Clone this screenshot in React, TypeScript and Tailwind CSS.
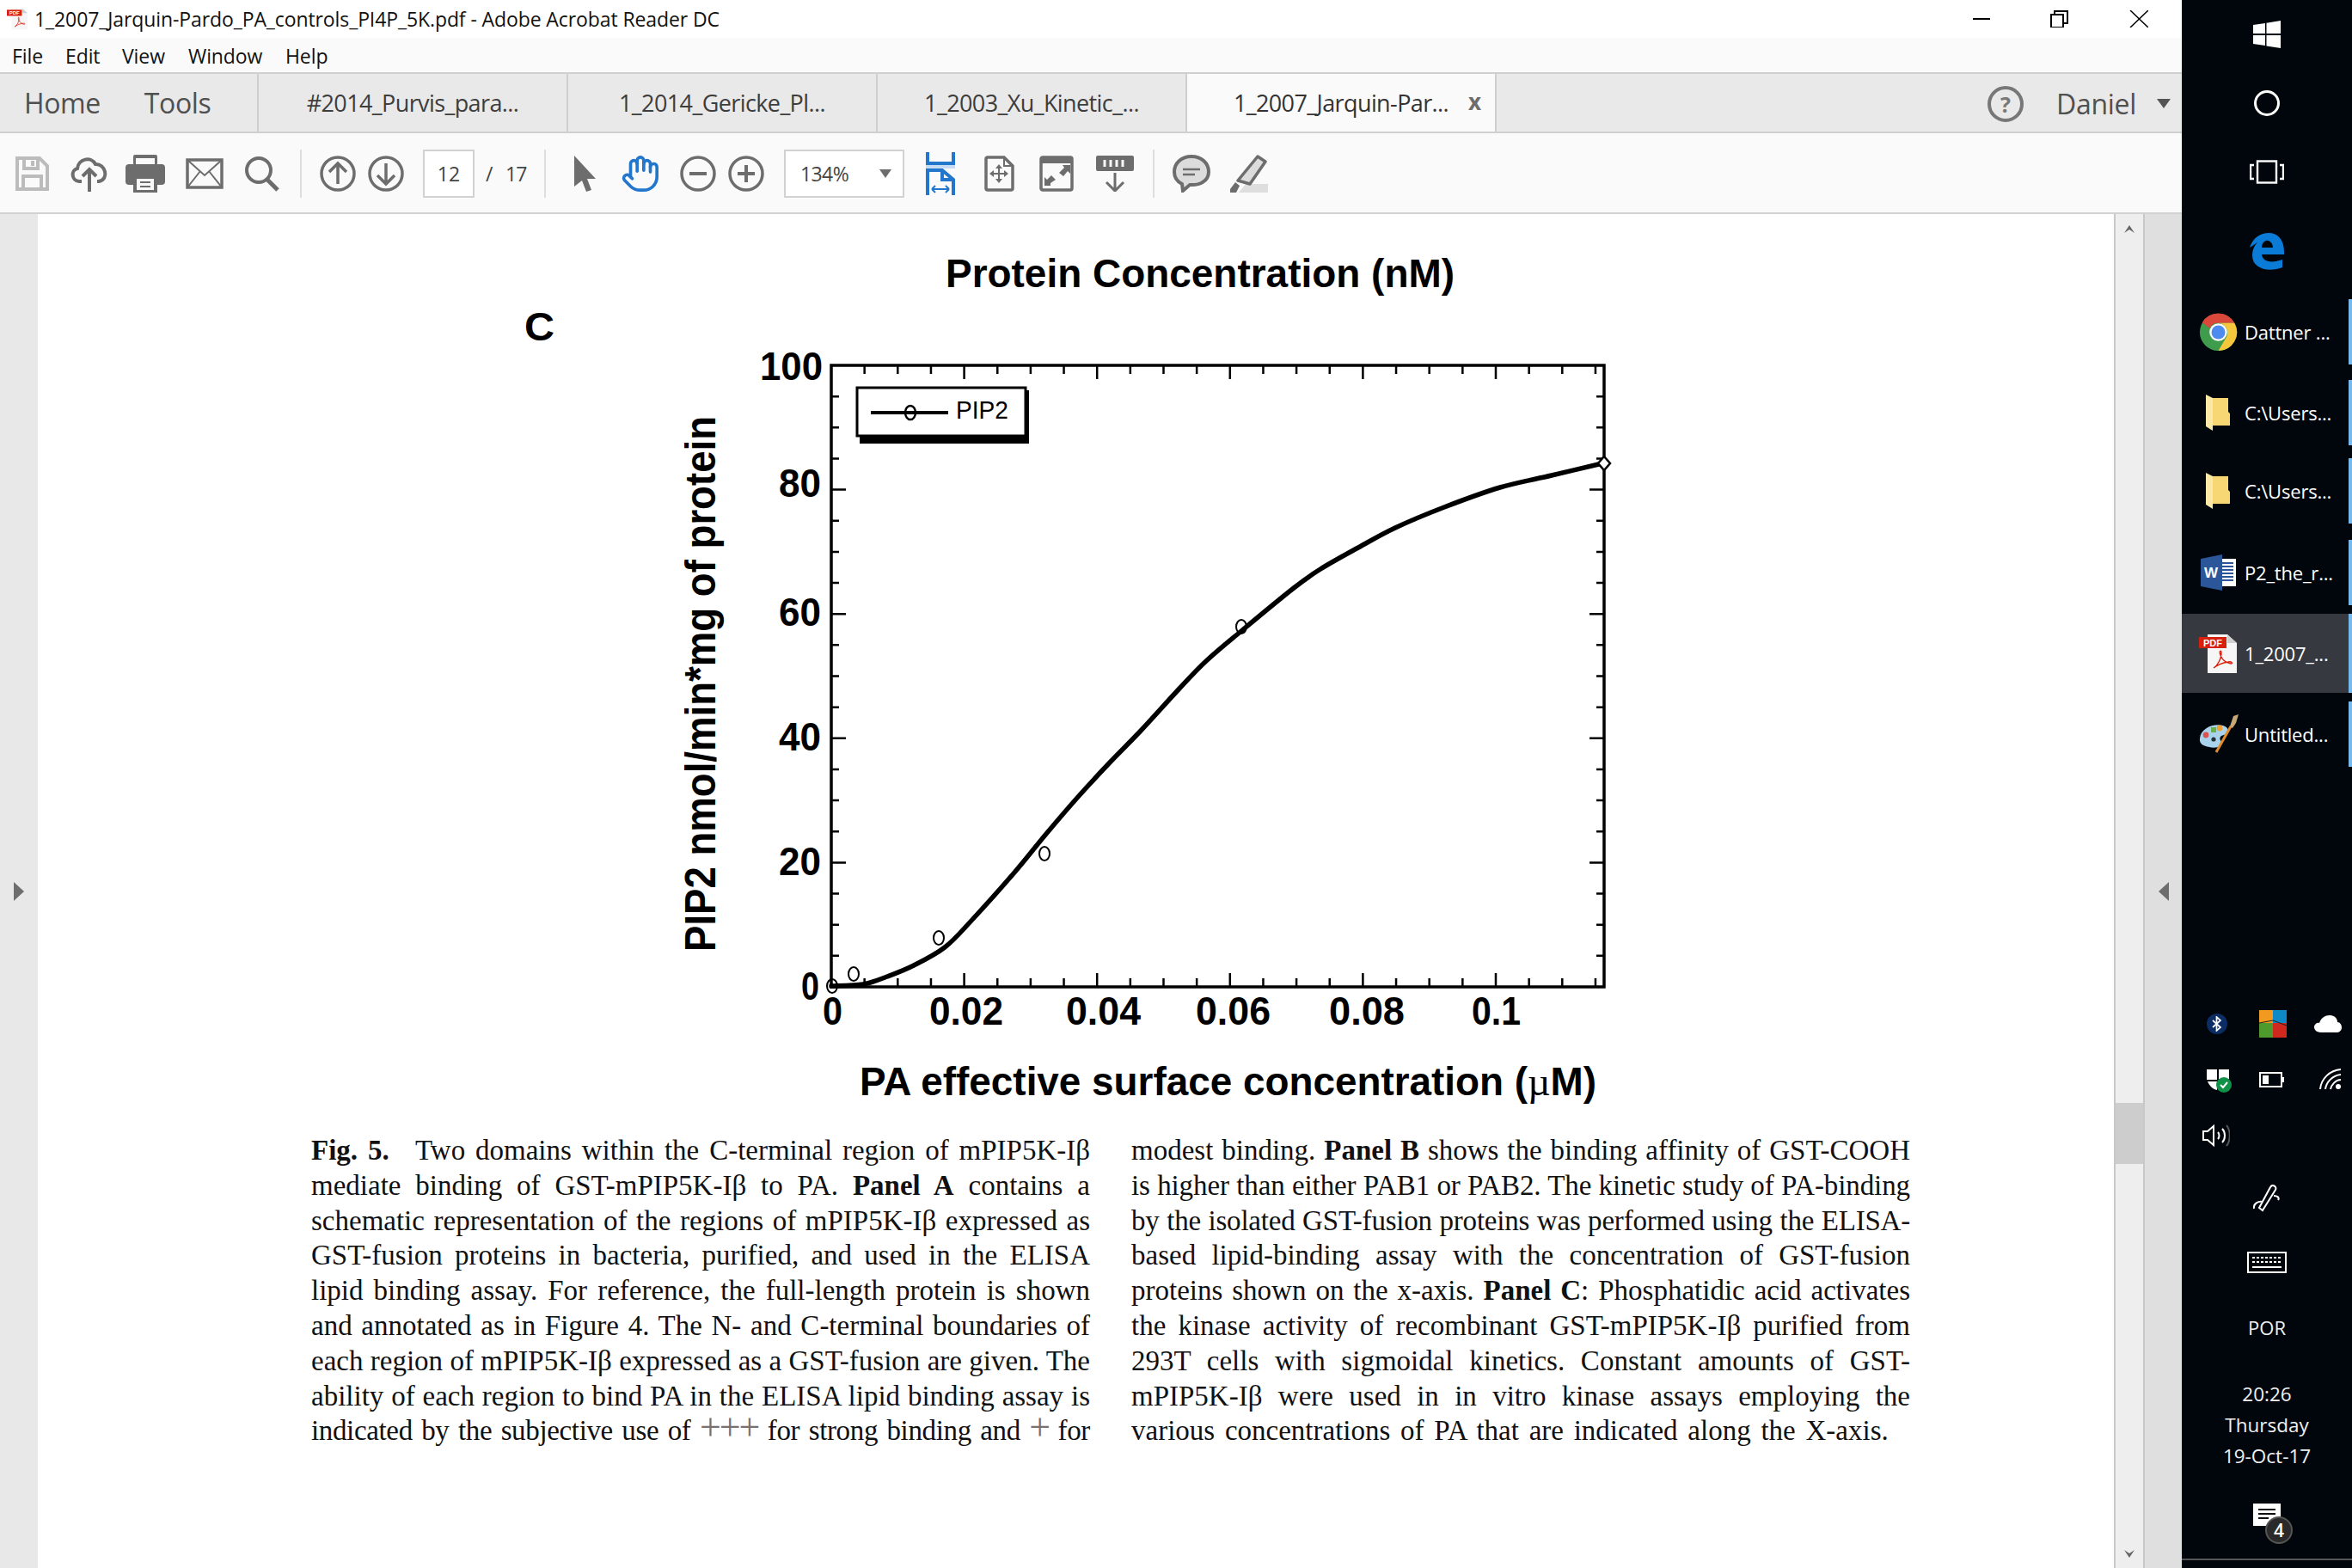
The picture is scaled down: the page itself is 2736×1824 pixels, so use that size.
import React from "react";
import { Hand } from "lucide-react";

const G = "#6d6d6d";
const ui = { fontFamily: '"Open Sans", "Noto Sans", sans-serif' };
const serif = { fontFamily: '"Liberation Serif", serif' };
const arial = '"Liberation Sans", Arial, sans-serif';

function PdfIcon({ w, h, label }: { w: number; h: number; label?: boolean }) {
  return (
    <svg width={w} height={h} viewBox="0 0 44 45" className="shrink-0">
      <path d="M10 0H33L44 10V45H10Z" fill="#f6f6f6" />
      <path d="M33 0V10H44Z" fill="#cfcfcf" />
      <rect x="0" y="3" width="32" height="13" fill="#d8200f" />
      {label && <text x="16" y="13.5" textAnchor="middle" fontSize="11" fontWeight="700" fill="#fff" fontFamily={arial}>PDF</text>}
      <path d="M17 39C22 36 26 28 26 21C26 18 23 19 25 24C27 30 31 33 37 34C40 34 38 31 34 32C28 33 22 35 17 39Z" fill="none" stroke="#d8200f" strokeWidth="1.4" />
    </svg>
  );
}
function Chrome() {
  return (
    <svg width="45" height="45" viewBox="0 0 48 48" className="shrink-0">
      <circle cx="24" cy="24" r="23" fill="#3f9c4d" />
      <path d="M4 12A23 23 0 0 1 44 12.5H24A12 12 0 0 0 13 19Z" fill="#d9483b" />
      <path d="M44 12.5A23 23 0 0 1 24 47L34 30A12 12 0 0 0 24 12.5Z" fill="#f5c73d" />
      <circle cx="24" cy="24" r="11" fill="#fff" />
      <circle cx="24" cy="24" r="8.5" fill="#4d8bf0" />
    </svg>
  );
}
function Folder() {
  return (
    <svg width="28" height="42" viewBox="0 0 28 42" className="shrink-0">
      <path d="M8 4H26V20L28 22V36H8Z" fill="#f7d774" />
      <path d="M0 0L8 4V42L0 37Z" fill="#fce9a8" />
    </svg>
  );
}
function Word() {
  return (
    <svg width="41" height="42" viewBox="0 0 41 42" className="shrink-0">
      <rect x="22" y="5" width="19" height="32" fill="#fff" />
      <path d="M25 10H38M25 14H38M25 18H38M25 22H38M25 26H38M25 30H38" stroke="#2b579a" strokeWidth="2" />
      <path d="M0 5L25 0V42L0 37Z" fill="#2b579a" />
      <text x="12" y="27" textAnchor="middle" fontSize="17" fontWeight="700" fill="#fff" fontFamily={arial}>W</text>
    </svg>
  );
}
function Paint() {
  return (
    <svg width="47" height="46" viewBox="0 0 47 46" className="shrink-0">
      <path d="M2 28C3 16 18 10 29 13C36 15 37 22 30 24C25 25 24 28 27 32C29 37 21 40 13 38C6 37 1 34 2 28Z" fill="#a9d3ec" />
      <circle cx="9" cy="24" r="3.4" fill="#d9534f" />
      <rect x="15" y="15" width="6" height="6" fill="#6ab04c" />
      <circle cx="25" cy="16" r="3.4" fill="#f0a030" />
      <circle cx="18" cy="29" r="2.6" fill="#26323a" />
      <path d="M21 44L38 14" stroke="#e28b2a" strokeWidth="3" />
      <path d="M37 14L41 2L47 0L44 10L40 16Z" fill="#c9a877" />
    </svg>
  );
}

function smooth(p: number[][]) {
  let d = `M${p[0][0]} ${p[0][1]}`;
  for (let i = 0; i < p.length - 1; i++) {
    const a = p[Math.max(0, i - 1)], b = p[i], c = p[i + 1], e = p[Math.min(p.length - 1, i + 2)];
    d += `C${b[0] + (c[0] - a[0]) / 6} ${b[1] + (c[1] - a[1]) / 6} ${c[0] - (e[0] - b[0]) / 6} ${c[1] - (e[1] - b[1]) / 6} ${c[0]} ${c[1]}`;
  }
  return d;
}

function FigureChart() {
  const x0 = 967, x1 = 1866, y0 = 1148, y1 = 425;
  const xs = Array.from({ length: 24 }, (_, i) => i);
  const ys = Array.from({ length: 21 }, (_, i) => i);
  const pts = [[967, 1147], [1004, 1145], [1032, 1136], [1063, 1123], [1099, 1102], [1129, 1072], [1180, 1015], [1217, 970], [1254, 927], [1290, 888], [1327, 850], [1371, 802], [1403, 769], [1444, 734], [1505, 684], [1536, 662], [1580, 637], [1623, 614], [1680, 590], [1745, 567], [1805, 553], [1864, 539]];
  const tick = { fontFamily: arial, fontWeight: 700 };
  const yl: [string, number, number, number][] = [["100", 884, 73, 442], ["80", 906, 49, 578], ["60", 906, 49, 728], ["40", 906, 49, 873], ["20", 906, 49, 1018], ["0", 932, 21, 1163]];
  const xl: [string, number, number][] = [["0", 957, 23], ["0.02", 1081, 86], ["0.04", 1240, 87], ["0.06", 1391, 87], ["0.08", 1546, 88], ["0.1", 1712, 57]];
  return (
    <svg viewBox="600 280 1300 1020" className="ml-[556px] mt-[31px] block h-[1020px] w-[1300px]">
      <text x="1100" y="334" fontSize="46" textLength="592" lengthAdjust="spacingAndGlyphs" {...tick}>Protein Concentration (nM)</text>
      <text x="610" y="396" fontSize="47" textLength="35" lengthAdjust="spacingAndGlyphs" {...tick}>C</text>
      <rect x={x0} y={y1} width={x1 - x0} height={y0 - y1} fill="#fff" stroke="#000" strokeWidth="3.5" />
      {xs.map((i) => {
        const x = x0 + i * 38.65;
        const l = i % 4 === 0 ? 16 : 10;
        return x < x1 - 4 && i > 0 ? (
          <path key={i} d={`M${x} ${y0}V${y0 - l}M${x} ${y1}V${y1 + l}`} stroke="#000" strokeWidth="2.5" />
        ) : null;
      })}
      {ys.map((i) => {
        const y = y0 - i * 36.15;
        const l = i % 4 === 0 ? 17 : 9;
        return i > 0 && i < 20 ? (
          <path key={i} d={`M${x0} ${y}H${x0 + l}M${x1} ${y}H${x1 - l}`} stroke="#000" strokeWidth="2.5" />
        ) : null;
      })}
      <path d={smooth(pts)} fill="none" stroke="#000" strokeWidth="5.5" strokeLinejoin="round" strokeLinecap="round" />
      {[[968, 1147], [993, 1133], [1092, 1091], [1215, 993], [1444, 729]].map(([x, y], i) => (
        <ellipse key={i} cx={x} cy={y} rx="6" ry="8" fill="none" stroke="#000" strokeWidth="2" />
      ))}
      <path d="M1866 531L1873 539L1866 547L1859 539Z" fill="#fff" stroke="#000" strokeWidth="2.5" />
      <path d="M1000 507V516H1197V454H1190V507Z" fill="#000" />
      <rect x="997" y="451" width="196" height="56" fill="#fff" stroke="#000" strokeWidth="3" />
      <path d="M1013 480H1103" stroke="#000" strokeWidth="4" />
      <ellipse cx="1059" cy="480" rx="6" ry="8" fill="none" stroke="#000" strokeWidth="2.5" />
      <text x="1112" y="487" fontSize="30" textLength="61" lengthAdjust="spacingAndGlyphs" fontFamily={arial}>PIP2</text>
      {yl.map(([t, x, w, y]) => (
        <text key={t + "y"} x={x} y={y} fontSize="46" textLength={w} lengthAdjust="spacingAndGlyphs" {...tick}>{t}</text>
      ))}
      {xl.map(([t, x, w]) => (
        <text key={t + "x"} x={x} y="1192" fontSize="46" textLength={w} lengthAdjust="spacingAndGlyphs" {...tick}>{t}</text>
      ))}
      <text x="1000" y="1274" fontSize="46" textLength="857" lengthAdjust="spacingAndGlyphs" {...tick}>
        PA effective surface concentration (<tspan fontFamily='"Liberation Serif", serif' fontWeight="400">µ</tspan>M)
      </text>
      <text transform="translate(832 1107) rotate(-90)" fontSize="50" textLength="623" lengthAdjust="spacingAndGlyphs" {...tick}>PIP2 nmol/min*mg of protein</text>
    </svg>
  );
}

function Line({ children, last, cls = "" }: { children: React.ReactNode; last?: boolean; cls?: string }) {
  return <div className={`h-[40.8px] whitespace-nowrap ${last ? "" : "text-justify [text-align-last:justify]"} ${cls}`}>{children}</div>;
}

function Plus({ children }: { children: string }) {
  return <span className="text-[44px] font-normal leading-[0] tracking-[-2px] text-[#7a7070]">{children}</span>;
}

function Caption() {
  return (
    <div className="ml-[318px] mt-[18px] flex w-[1862px] gap-[48px] text-[33px] leading-[40.8px] text-[#111]" style={serif}>
      <div className="w-[906px] shrink-0">
        <Line><b className="mr-[19px]">Fig. 5.</b> Two domains within the C-terminal region of mPIP5K-Iβ</Line>
        <Line>mediate binding of GST-mPIP5K-Iβ to PA. <b>Panel A</b> contains a</Line>
        <Line>schematic representation of the regions of mPIP5K-Iβ expressed as</Line>
        <Line>GST-fusion proteins in bacteria, purified, and used in the ELISA</Line>
        <Line>lipid binding assay. For reference, the full-length protein is shown</Line>
        <Line>and annotated as in Figure 4. The N- and C-terminal boundaries of</Line>
        <Line>each region of mPIP5K-Iβ expressed as a GST-fusion are given. The</Line>
        <Line>ability of each region to bind PA in the ELISA lipid binding assay is</Line>
        <Line cls="tracking-[-0.35px]">indicated by the subjective use of <Plus>+++</Plus> for strong binding and <Plus>+</Plus> for</Line>
      </div>
      <div className="w-[906px] shrink-0">
        <Line>modest binding. <b>Panel B</b> shows the binding affinity of GST-COOH</Line>
        <Line cls="tracking-[-0.1px]">is higher than either PAB1 or PAB2. The kinetic study of PA-binding</Line>
        <Line cls="tracking-[-0.2px]">by the isolated GST-fusion proteins was performed using the ELISA-</Line>
        <Line>based lipid-binding assay with the concentration of GST-fusion</Line>
        <Line>proteins shown on the x-axis. <b>Panel C</b>: Phosphatidic acid activates</Line>
        <Line>the kinase activity of recombinant GST-mPIP5K-Iβ purified from</Line>
        <Line>293T cells with sigmoidal kinetics. Constant amounts of GST-</Line>
        <Line>mPIP5K-Iβ were used in in vitro kinase assays employing the</Line>
        <Line last cls="[word-spacing:3.5px]">various concentrations of PA that are indicated along the X-axis.</Line>
      </div>
    </div>
  );
}

function Tab({ label, active }: { label: string; active?: boolean }) {
  return (
    <div className={`relative flex h-full w-[360px] shrink-0 items-center justify-center border-r-2 border-[#cfcfcf] text-[27px] ${active ? "bg-[#fafafa] text-[#333]" : "text-[#3d3d3d]"}`}>
      <span className="mt-[2px] tracking-[-0.6px]">{label}</span>
      {active && <span className="absolute left-[327px] top-[13px] text-[26px] font-bold text-[#6d6d6d]">x</span>}
    </div>
  );
}

function Toolbar() {
  const sep = "h-[56px] w-[2px] shrink-0 bg-[#dedede]";
  return (
    <div className="flex h-[94px] shrink-0 items-center border-b-2 border-[#d2d2d2] bg-[#fafafa] pl-[17px] pt-[2px]">
      <svg width="40" height="42" viewBox="0 0 40 42" className="shrink-0" fill="none" stroke="#bcbcbc" strokeWidth="4">
        <path d="M3 3H29L38 12V39H3Z" /><path d="M11 3V15H27V3" /><path d="M10 39V24H31V39" /><path d="M21 6V12" />
      </svg>
      <svg width="44" height="44" viewBox="0 0 44 44" className="ml-[25px] shrink-0" fill="none" stroke={G} strokeWidth="4">
        <path d="M13 31H10C1 30 0 18 8 16C9 5 24 1 29 11C40 10 46 28 33 31H31" /><path d="M22 43V18M14 25L22 17L30 25" />
      </svg>
      <svg width="46" height="44" viewBox="0 0 46 44" className="ml-[20px] shrink-0">
        <rect x="9" y="0" width="28" height="12" rx="2" fill={G} /><rect x="12" y="4" width="22" height="8" fill="#fafafa" />
        <rect x="0" y="11" width="46" height="24" rx="4" fill={G} /><rect x="9" y="26" width="28" height="18" fill={G} /><rect x="13" y="28" width="20" height="13" fill="#fafafa" />
        <path d="M17 32H29M17 37H29" stroke={G} strokeWidth="2" />
      </svg>
      <svg width="44" height="36" viewBox="0 0 44 36" className="ml-[24px] shrink-0" fill="none" stroke={G} strokeWidth="3.5">
        <rect x="2" y="2" width="40" height="32" /><path d="M2 2L22 20L42 2M2 34L17 15M42 34L27 15" strokeWidth="2" />
      </svg>
      <svg width="41" height="42" viewBox="0 0 41 42" className="ml-[24px] shrink-0" fill="none" stroke={G} strokeWidth="4">
        <circle cx="17" cy="17" r="14" /><path d="M27 28L39 40" strokeWidth="5" />
      </svg>
      <div className={`ml-[24px] ${sep}`} />
      <svg width="42" height="42" viewBox="0 0 42 42" className="ml-[21px] shrink-0" fill="none" stroke={G} strokeWidth="3.5">
        <circle cx="21" cy="21" r="19" /><path d="M21 33V9M11 19L21 9L31 19" />
      </svg>
      <svg width="42" height="42" viewBox="0 0 42 42" className="ml-[14px] shrink-0" fill="none" stroke={G} strokeWidth="3.5">
        <circle cx="21" cy="21" r="19" /><path d="M21 9V33M11 23L21 33L31 23" />
      </svg>
      <div className="ml-[22px] flex h-[56px] w-[60px] shrink-0 items-center justify-center border-2 border-[#d2d2d2] bg-white text-[23px] text-[#444]">12</div>
      <span className="ml-[13px] w-[12px] shrink-0 text-[23px] text-[#444]">/</span>
      <span className="ml-[11px] w-[26px] shrink-0 text-[23px] text-[#444] tracking-[-1px]">17</span>
      <div className={`ml-[19px] ${sep}`} />
      <svg width="27" height="42" viewBox="0 0 27 42" className="ml-[32px] shrink-0">
        <path d="M1 0L26 27H16L21 40L15 42L10 29L1 36Z" fill={G} />
      </svg>
      <Hand className="ml-[28px] h-[48px] w-[46px] shrink-0 text-[#2277cc]" strokeWidth={1.9} />
      <svg width="42" height="42" viewBox="0 0 42 42" className="ml-[23px] shrink-0" fill="none" stroke={G} strokeWidth="3.5">
        <circle cx="21" cy="21" r="19" /><path d="M11 21H31" strokeWidth="4" />
      </svg>
      <svg width="42" height="42" viewBox="0 0 42 42" className="ml-[14px] shrink-0" fill="none" stroke={G} strokeWidth="3.5">
        <circle cx="21" cy="21" r="19" /><path d="M11 21H31M21 11V31" strokeWidth="4" />
      </svg>
      <div className="relative ml-[23px] flex h-[56px] w-[140px] shrink-0 items-center border-2 border-[#d2d2d2] bg-white pl-[17px] text-[23px] text-[#444] tracking-[-0.6px]">
        134%
        <svg width="14" height="10" viewBox="0 0 14 10" className="absolute left-[109px] top-[21px]"><path d="M0 0H14L7 10Z" fill={G} /></svg>
      </div>
      <svg width="34" height="50" viewBox="0 0 34 50" className="ml-[25px] shrink-0" fill="none" stroke="#2277cc" strokeWidth="4">
        <path d="M2 0V13H32V0" /><rect x="0" y="15" width="34" height="4" fill="#c5dcf2" stroke="none" />
        <path d="M2 50V21H19L32 32V50M19 21V32H32" /><path d="M7 43H27M7 43L11 39M7 43L11 47M27 43L23 39M27 43L23 47" strokeWidth="2" />
      </svg>
      <svg width="36" height="42" viewBox="0 0 36 42" className="ml-[33px] shrink-0" fill="none" stroke={G} strokeWidth="3.5">
        <path d="M3 4Q3 2 5 2H24L34 12V38Q34 40 32 40H5Q3 40 3 38Z" /><path d="M24 2V12H34" strokeWidth="2" />
        <path d="M18 12V30M10 21H26" strokeWidth="2" /><path d="M14 15L18 10L22 15ZM14 27L18 32L22 27ZM12 17L7 21L12 25ZM24 17L29 21L24 25Z" fill={G} stroke="none" />
      </svg>
      <svg width="40" height="42" viewBox="0 0 40 42" className="ml-[29px] shrink-0" fill="none" stroke={G} strokeWidth="3.5">
        <rect x="2" y="2" width="36" height="38" rx="2" /><path d="M2 6H38" strokeWidth="6" />
        <path d="M27 11H36V21L33 18L28 24L23 20L29 14ZM13 35H6V25L9 28L14 23L19 28L13 32Z" fill={G} stroke="none" />
      </svg>
      <svg width="44" height="42" viewBox="0 0 44 42" className="ml-[26px] shrink-0" fill="none">
        <rect x="0" y="0" width="44" height="18" rx="2" fill={G} /><path d="M10 5V13M17 5V13M24 5V13M31 5V13" stroke="#fafafa" strokeWidth="3" />
        <path d="M22 20V41M12 31L22 41L32 31" stroke={G} strokeWidth="3" />
      </svg>
      <div className={`ml-[22px] ${sep}`} />
      <svg width="44" height="44" viewBox="0 0 44 44" className="ml-[21px] shrink-0">
        <path d="M22 2C34 2 42 10 42 20C42 30 32 36 20 35L12 42L11 34C5 31 2 26 2 20C2 10 10 2 22 2Z" fill="#dcdcdc" stroke={G} strokeWidth="4" />
        <path d="M12 17H32M12 23H26" stroke={G} strokeWidth="2.5" />
      </svg>
      <svg width="46" height="44" viewBox="0 0 46 44" className="ml-[21px] shrink-0">
        <path d="M12 44L20 34H46V44Z" fill="#dedede" />
        <path d="M34 2L43 8L25 34L11 30Z" fill="#dcdcdc" stroke={G} strokeWidth="3.5" strokeLinejoin="round" />
        <path d="M8 32L2 40L2 44H9L13 36Z" fill={G} />
      </svg>
    </div>
  );
}

function TaskRow({ icon, label, h, active, bar }: { icon: React.ReactNode; label: string; h: string; active?: boolean; bar: string }) {
  return (
    <div className={`relative flex shrink-0 items-center pr-[4px] ${h} ${active ? "bg-[#363a40]" : ""}`}>
      <div className="flex w-[73px] shrink-0 items-center justify-center pl-[11px]">{icon}</div>
      <span className="truncate text-[22px] tracking-[-0.2px] text-white" style={ui}>{label}</span>
      <div className={`absolute right-0 w-[4px] bg-[#76b9ed] ${bar}`} />
    </div>
  );
}

function Taskbar() {
  return (
    <div className="flex w-[198px] shrink-0 flex-col items-stretch bg-[#01060d]" style={ui}>
      <div className="ml-[83px] mt-[24px] shrink-0">
        <svg width="32" height="32" viewBox="0 0 32 32" className="block"><path d="M0 5L14 3V15H0ZM15.5 2.7L32 0V15H15.5ZM0 17H14V29L0 27ZM15.5 17H32V32L15.5 29.5Z" fill="#fff" /></svg>
      </div>
      <div className="ml-[84px] mt-[49px] h-[30px] w-[30px] shrink-0 rounded-full border-[3.5px] border-white" />
      <svg width="40" height="28" viewBox="0 0 40 28" className="ml-[79px] mt-[51px] block shrink-0" fill="none" stroke="#fff" strokeWidth="2.4">
        <rect x="9" y="1.5" width="22" height="25" /><path d="M5 6H1V22H5M35 6H39V22H35" />
      </svg>
      <svg width="40" height="43" viewBox="0 0 40 43" className="ml-[79px] mt-[57px] block shrink-0">
        <path fillRule="evenodd" d="M0 17C4 5 13 0 22 0C33 0 40 8 40 22V25H14C15 33 24 36 38 31V40C22 46 3 42 3 26C3 20 5 15 9 11C6 13 3 15 0 17ZM14 17H27C27 11 22 8 19 9C16 10 14 13 14 17Z" fill="#0a7bd6" />
      </svg>
      <div className="mt-[34px] flex flex-col">
        <TaskRow h="h-[76px]" bar="top-0 h-[76px]" icon={<Chrome />} label="Dattner ..." />
        <div className="h-[18px]" />
        <TaskRow h="h-[76px]" bar="top-0 h-[76px]" icon={<Folder />} label="C:\Users..." />
        <div className="h-[15px]" />
        <TaskRow h="h-[76px]" bar="top-0 h-[76px]" icon={<Folder />} label="C:\Users..." />
        <div className="h-[19px]" />
        <TaskRow h="h-[76px]" bar="top-0 h-[76px]" icon={<Word />} label="P2_the_r..." />
        <div className="h-[10px]" />
        <TaskRow h="h-[92px]" active bar="top-0 h-[92px]" icon={<PdfIcon w={44} h={45} label />} label="1_2007_..." />
        <div className="h-[10px]" />
        <TaskRow h="h-[76px]" bar="top-0 h-[76px]" icon={<Paint />} label="Untitled..." />
      </div>
      <div className="ml-[24px] mt-[266px] grid w-[174px] shrink-0 grid-cols-3 grid-rows-[65px_65px_65px] items-center">
        <div className="ml-[5px] flex h-[24px] w-[24px] items-center justify-center rounded-full bg-[#0b2d63]">
          <svg width="12" height="18" viewBox="0 0 12 18" fill="none" stroke="#fff" strokeWidth="1.7"><path d="M1 5L10 13L5.5 17V1L10 5L1 13" /></svg>
        </div>
        <svg width="32" height="32" viewBox="0 0 32 32" className="ml-[8px]">
          <rect width="16" height="15" fill="#f29a1f" /><rect x="16" width="16" height="15" fill="#0d8ac6" /><rect y="15" width="16" height="17" fill="#4f9a2d" /><rect x="16" y="15" width="16" height="17" fill="#d0281c" /><path d="M0 15L16 12L32 18" stroke="#222" strokeWidth="1" fill="none" />
        </svg>
        <svg width="32" height="21" viewBox="0 0 32 21" className="ml-[14px]"><path d="M8 21C2 21 0 17 0 15C0 11 4 9 6 10C8 4 13 1 18 1C24 1 27 5 27 9C30 9 32 12 32 15C32 19 29 21 26 21Z" fill="#fff" /></svg>
        <svg width="30" height="30" viewBox="0 0 30 30" className="ml-[4px]">
          <path d="M1 3H13V15H1C1 15 1 10 1 3ZM15 3H27V14H15ZM2 17H13V27C8 26 4 22 2 17Z" fill="#fff" /><circle cx="21" cy="21" r="9" fill="#119148" /><path d="M17 21L20 24L25 18" stroke="#fff" strokeWidth="2" fill="none" />
        </svg>
        <svg width="29" height="18" viewBox="0 0 29 18" className="ml-[8px]" fill="none" stroke="#fff" strokeWidth="2"><rect x="1" y="1" width="25" height="16" /><rect x="4" y="4" width="7" height="10" fill="#fff" stroke="none" /><rect x="27" y="6" width="2" height="6" fill="#fff" stroke="none" /></svg>
        <svg width="26" height="25" viewBox="0 0 26 25" className="ml-[20px]" fill="none" stroke="#fff" strokeWidth="2"><path d="M1 24C2 12 12 2 25 1M7 24C8 16 15 8 25 7M13 24C14 19 19 13 25 13" /><circle cx="22" cy="21" r="3" fill="#fff" stroke="none" /></svg>
        <svg width="32" height="28" viewBox="0 0 32 28" fill="none" stroke="#fff" strokeWidth="2">
          <path d="M1 9H6L13 3V25L6 19H1Z" /><path d="M18 10C20 12 20 16 18 18M23 6C27 10 27 18 23 22" /><path d="M28 2C33 8 33 20 28 26" stroke="#555" />
        </svg>
      </div>
      <svg width="32" height="32" viewBox="0 0 32 32" className="ml-[83px] mt-[25px] block shrink-0" fill="none" stroke="#fff" strokeWidth="2">
        <path d="M11 30L26 6C28 2 22 -1 20 3L7 27ZM1 28C0 22 6 19 11 20M24 13C28 13 31 15 29 18" />
      </svg>
      <svg width="46" height="25" viewBox="0 0 46 25" className="ml-[76px] mt-[46px] block shrink-0" fill="none" stroke="#fff">
        <rect x="1" y="1" width="44" height="23" strokeWidth="2" />
        <path d="M6 7H40M6 12H40" strokeWidth="2" strokeDasharray="3 2" /><path d="M6 18H40" strokeWidth="2" />
      </svg>
      <div className="mt-[46px] shrink-0 text-center text-[22px] leading-[34px] text-[#f0f0f0]">POR</div>
      <div className="mt-[43px] shrink-0 text-center text-[22.5px] leading-[36px] text-[#f0f0f0]">
        <div>20:26</div><div>Thursday</div><div>19-Oct-17</div>
      </div>
      <div className="relative ml-[83px] mt-[37px] h-[26px] w-[32px] shrink-0 bg-white">
        <div className="mx-[6px] mt-[6px] h-[2px] bg-[#111]" /><div className="mx-[6px] mt-[3px] h-[2px] bg-[#111]" /><div className="mx-[6px] mt-[3px] h-[2px] w-[12px] bg-[#111]" />
        <div className="absolute left-[14px] top-[15px] flex h-[32px] w-[32px] items-center justify-center rounded-full border-2 border-[#555] bg-[#2a2a2a] text-[21px] font-semibold leading-none text-white">4</div>
      </div>
      <div className="mt-[38px] h-[2px] shrink-0 bg-[#555]" />
    </div>
  );
}

export default function App() {
  return (
    <div className="flex h-[1824px] w-[2736px] overflow-hidden bg-white" style={ui}>
      <div className="flex min-w-0 flex-1 flex-col">
        <div className="flex h-[44px] shrink-0 items-center bg-white pl-[8px]">
          <PdfIcon w={24} h={30} label />
          <span className="ml-[8px] text-[23px] tracking-[-0.1px] text-[#111]">1_2007_Jarquin-Pardo_PA_controls_PI4P_5K.pdf - Adobe Acrobat Reader DC</span>
          <svg width="204" height="20" viewBox="0 0 204 20" className="ml-auto mr-[39px]" fill="none" stroke="#000" strokeWidth="2">
            <path d="M0 10H20" />
            <rect x="91" y="5" width="14" height="15" /><path d="M95 5V1H110V15H105" />
            <path d="M183 0L204 20M204 0L183 20" strokeWidth="1.5" />
          </svg>
        </div>
        <div className="flex h-[40px] shrink-0 items-center bg-[#fafafa] pl-[14px] pt-[2px] text-[23px] tracking-[-0.1px] text-[#111]">
          <span className="w-[62px]">File</span><span className="w-[66px]">Edit</span><span className="w-[77px]">View</span><span className="w-[113px]">Window</span><span>Help</span>
        </div>
        <div className="flex h-[71px] shrink-0 items-center border-y-2 border-[#cfcfcf] bg-[#e9e9e9]">
          <div className="flex h-full w-[301px] shrink-0 items-center border-r-2 border-[#cfcfcf] pl-[28px] text-[32px] text-[#505050]">
            <span className="tracking-[-0.4px]">Home</span><span className="ml-[51px] tracking-[-0.4px]">Tools</span>
          </div>
          <Tab label="#2014_Purvis_para..." />
          <Tab label="1_2014_Gericke_Pl..." />
          <Tab label="1_2003_Xu_Kinetic_..." />
          <Tab label="1_2007_Jarquin-Par..." active />
          <div className="flex-1" />
          <div className="mt-[3px] flex h-[42px] w-[42px] shrink-0 items-center justify-center rounded-full border-[4px] border-[#777] text-[25px] font-bold leading-none text-[#777]">?</div>
          <span className="ml-[38px] mt-[3px] text-[32px] tracking-[-0.3px] text-[#505050]">Daniel</span>
          <svg width="16" height="11" viewBox="0 0 16 11" className="ml-[24px] mr-[13px] mt-[2px]"><path d="M0 0H16L8 11Z" fill="#555" /></svg>
        </div>
        <Toolbar />
        <div className="flex min-h-0 flex-1">
          <div className="flex w-[44px] shrink-0 items-center bg-[#e8e8e8] pl-[16px]">
            <svg width="12" height="22" viewBox="0 0 12 22"><path d="M0 0L12 11L0 22Z" fill={G} /></svg>
          </div>
          <div className="min-w-0 flex-1 bg-white">
            <FigureChart />
            <Caption />
          </div>
          <div className="flex w-[36px] shrink-0 flex-col items-center border-x-2 border-[#c8c8c8] bg-[#eeeeee]">
            <svg width="12" height="9" viewBox="0 0 12 9" className="mt-[13px] shrink-0"><path d="M0 9L6 0L12 9L6 5Z" fill="#666" /></svg>
            <div className="mt-[1012px] h-[71px] w-full shrink-0 bg-[#cdcdcd]" />
            <div className="flex-1" />
            <svg width="12" height="9" viewBox="0 0 12 9" className="mb-[12px] shrink-0"><path d="M0 0L6 9L12 0L6 4Z" fill="#666" /></svg>
          </div>
          <div className="flex w-[43px] shrink-0 items-center justify-center bg-[#dfdfdf]">
            <svg width="12" height="22" viewBox="0 0 12 22"><path d="M12 0L0 11L12 22Z" fill={G} /></svg>
          </div>
        </div>
      </div>
      <Taskbar />
    </div>
  );
}
